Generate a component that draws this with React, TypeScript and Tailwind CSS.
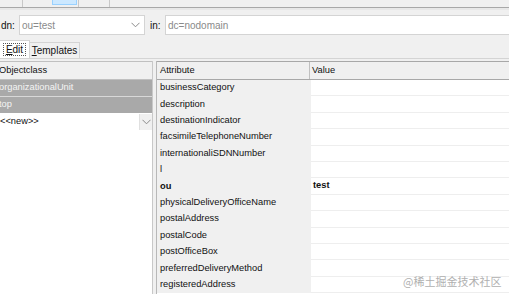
import React from 'react';

const attributes: { name: string; value?: string; bold?: boolean }[] = [
  { name: 'businessCategory' },
  { name: 'description' },
  { name: 'destinationIndicator' },
  { name: 'facsimileTelephoneNumber' },
  { name: 'internationaliSDNNumber' },
  { name: 'l' },
  { name: 'ou', value: 'test', bold: true },
  { name: 'physicalDeliveryOfficeName' },
  { name: 'postalAddress' },
  { name: 'postalCode' },
  { name: 'postOfficeBox' },
  { name: 'preferredDeliveryMethod' },
  { name: 'registeredAddress' },
];

const Chevron: React.FC = () => (
  <svg width="9" height="6" viewBox="0 0 9 6" fill="none">
    <path d="M0.5 0.8 L4.5 4.8 L8.5 0.8" stroke="#8a8a8a" strokeWidth="1" />
  </svg>
);

const App: React.FC = () => {
  return (
    <div
      className="relative w-[509px] h-[294px] overflow-hidden bg-[#f0f0f0] flex flex-col text-[9.3px] text-[#111]"
      style={{ fontFamily: '"Liberation Sans", Arial, sans-serif' }}
    >
      {/* Toolbar strip */}
      <div className="h-[7px] flex">
        <div className="w-[22px]" />
        <div className="w-[30px] border-l border-[#c8c8c8]" />
        <div className="w-[25px] h-[5px] bg-[#cce8ff] border border-t-0 border-[#99d1ff]" />
        <div className="w-[31px] ml-[1px] border-l border-[#c8c8c8]" />
        <div className="w-px border-l border-[#c8c8c8]" />
      </div>
      <div className="h-px bg-[#a8a8a8]" />
      <div className="h-[2px] bg-[#e8e8e8]" />

      {/* dn / in row */}
      <div className="mt-[5px] h-[20px] flex items-center">
        <span className="w-[19px] pl-[1px] text-[10px]">dn:</span>
        <div className="w-[126px] h-[20px] bg-white border border-[#d4d4d4] flex items-center justify-between pl-[2px] pr-[4px] text-[10px] text-[#8a8a8a]">
          <span>ou=test</span>
          <Chevron />
        </div>
        <span className="ml-[5px] w-[15px] text-[10px]">in:</span>
        <div className="flex-1 h-[20px] bg-white border border-[#d4d4d4] border-r-0 flex items-center pl-[2px] text-[10px] text-[#8a8a8a]">
          dc=nodomain
        </div>
      </div>

      {/* Tabs */}
      <div className="mt-[5px] h-[18px] flex items-end">
        <div className="w-[30px] h-[18px] bg-white border border-b-0 border-[#d4d4d4] border-l-0 flex items-center justify-center">
          <span className="border border-dotted border-[#555] px-[2px] leading-[11px] text-[10px]">
            <span className="underline">E</span>dit
          </span>
        </div>
        <div className="w-[50px] h-[16px] bg-[#f0f0f0] border border-b-0 border-l-0 border-[#d4d4d4] flex items-center justify-center text-[10px]">
          <span>
            <span className="underline">T</span>emplates
          </span>
        </div>
      </div>
      <div className="h-px bg-[#d4d4d4]" />

      {/* Main area */}
      <div className="mt-[2px] flex-1 flex min-h-0">
        {/* Objectclass list */}
        <div className="w-[153px] flex flex-col bg-white border-r border-[#c8c8c8]">
          <div className="h-[19px] bg-[#f0f0f0] border-t border-b border-[#c0c0c0] flex items-center -ml-[1px]">
            Objectclass
          </div>
          <div className="h-[16.5px] bg-[#a9a9a9] text-[#f4f4f4] flex items-center -ml-[1px] border-b border-[#d8d8d8]">
            organizationalUnit
          </div>
          <div className="h-[16.5px] bg-[#a9a9a9] text-[#f4f4f4] flex items-center -ml-[1px]">
            top
          </div>
          <div className="h-[17px] flex items-center justify-between">
            <span>&lt;&lt;new&gt;&gt;</span>
            <div className="w-[13px] h-[16px] bg-[#f0f0f0] border-l border-[#e0e0e0] flex items-center justify-center">
              <Chevron />
            </div>
          </div>
        </div>

        {/* Splitter */}
        <div className="w-[4px] bg-[#f0f0f0] border-r border-[#b8b8b8]" />

        {/* Attribute table */}
        <div className="flex-1 flex flex-col bg-white">
          <div className="h-[19px] shrink-0 flex bg-[#f0f0f0] border-t border-b border-[#a8a8a8]">
            <div className="w-[153px] flex items-center pl-[3px] border-r border-[#c0c0c0]">Attribute</div>
            <div className="flex-1 flex items-center pl-[2px]">Value</div>
          </div>
          {attributes.map((a) => (
            <div key={a.name} className="h-[16.4px] flex shrink-0">
              <div className={`w-[154px] bg-[#f0f0f0] flex items-center pl-[3px] ${a.bold ? 'font-bold' : ''}`}>
                {a.name}
              </div>
              <div className={`flex-1 border-b border-[#eeeeee] flex items-center pl-[2px] ${a.bold ? 'font-bold' : ''}`}>
                {a.value ?? ''}
              </div>
            </div>
          ))}
        </div>
      </div>

      {/* Watermark */}
      <div
        className="absolute left-[403px] top-[273px] text-[11px] text-[#b0b0b0]"
        style={{ fontFamily: '"Noto Sans CJK SC", sans-serif' }}
      >
        @稀土掘金技术社区
      </div>
    </div>
  );
};

export default App;
